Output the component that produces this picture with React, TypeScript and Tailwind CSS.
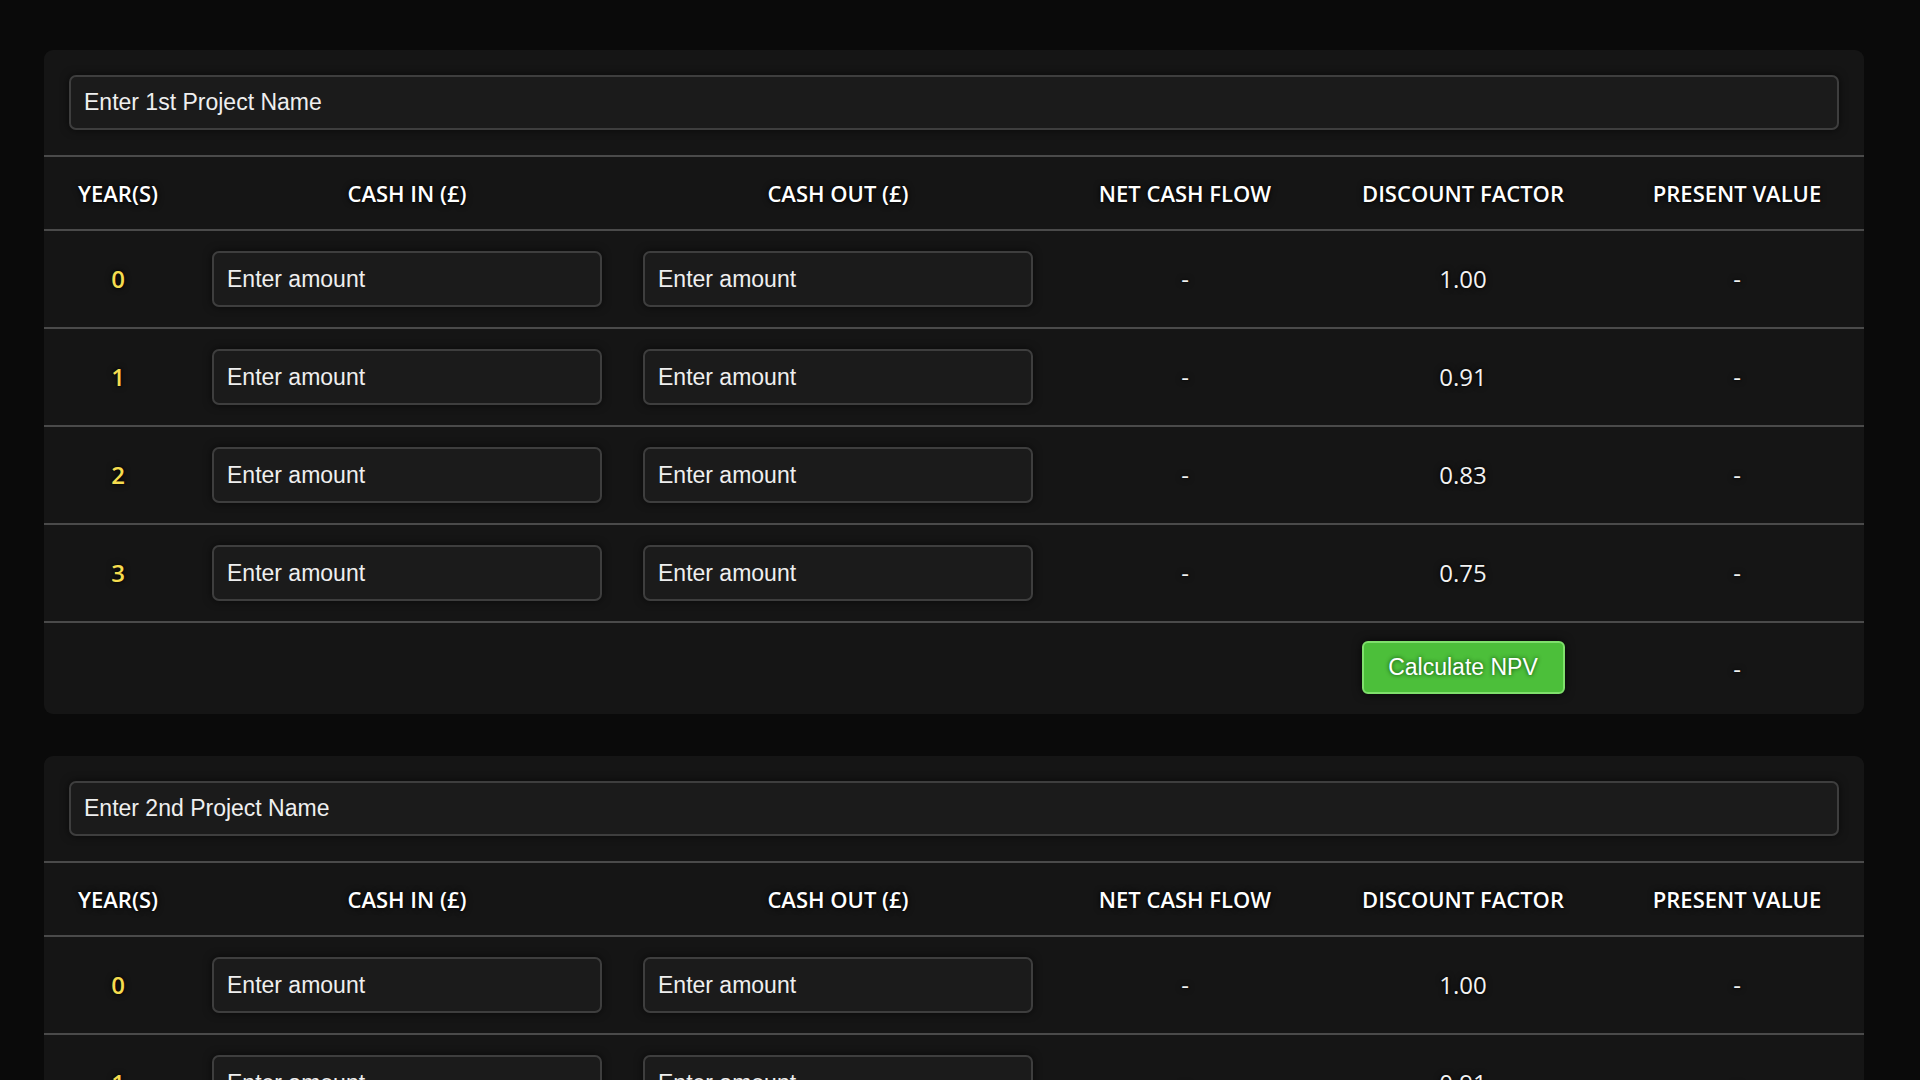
const headers = ["YEAR(S)", "CASH IN (£)", "CASH OUT (£)", "NET CASH FLOW", "DISCOUNT FACTOR", "PRESENT VALUE"];
const factors = ["1.00", "0.91", "0.83", "0.75"];

const cols = "grid grid-cols-[148px_430px_432px_262px_294px_254px]";
const glow = "[text-shadow:0_0_6px_rgba(0,0,0,0.9),0_0_2px_rgba(0,0,0,0.9)]";

function AmountInput() {
    return (
        <input
            type="text"
            placeholder="Enter amount"
            className="w-[390px] h-[56px] rounded-[7px] border-2 border-[#3e3e3e] bg-[#1b1b1b] px-[13px] text-[23px] text-white placeholder:text-[#efefef] shadow-[0_0_8px_rgba(0,0,0,0.6)] outline-none font-['Liberation_Sans',Arial,sans-serif]"
        />
    );
}

function ProjectCard({ label }: { label: string }) {
    return (
        <div className="w-[1820px] rounded-[9px] bg-[#151515]">
            {/* Project name */}
            <div className="px-[25px] pt-[25px] pb-[25px] border-b-2 border-[#4a4a4a]">
                <input
                    type="text"
                    placeholder={label}
                    className="w-full h-[55px] rounded-[7px] border-2 border-[#3e3e3e] bg-[#1b1b1b] px-[13px] text-[23px] text-white placeholder:text-[#efefef] shadow-[0_0_8px_rgba(0,0,0,0.6)] outline-none font-['Liberation_Sans',Arial,sans-serif]"
                />
            </div>

            {/* Header row */}
            <div className={`${cols} h-[74px] items-center border-b-2 border-[#4a4a4a] font-['Open_Sans',sans-serif] font-semibold text-[22px] text-white ${glow}`}>
                {headers.map((h) => (
                    <div key={h} className="text-center">{h}</div>
                ))}
            </div>

            {/* Year rows */}
            {factors.map((f, i) => (
                <div key={i} className={`${cols} h-[98px] items-center border-b-2 border-[#4a4a4a] font-['Open_Sans',sans-serif] text-[24px] text-[#f2f2f2] ${glow}`}>
                    <div className="text-center font-semibold text-[#f5dc4f]">{i}</div>
                    <div className="flex justify-center"><AmountInput /></div>
                    <div className="flex justify-center"><AmountInput /></div>
                    <div className="text-center">-</div>
                    <div className="text-center">{f}</div>
                    <div className="text-center">-</div>
                </div>
            ))}

            {/* Footer */}
            <div className={`${cols} h-[91px] items-center font-['Open_Sans',sans-serif] text-[24px] text-[#f2f2f2] ${glow}`}>
                <div />
                <div />
                <div />
                <div />
                <div className="flex justify-center -mt-[3px]">
                    <button className="w-[203px] h-[53px] rounded-[6px] border-2 border-[#7fe06c] bg-[#4cbf3a] text-[23px] text-white font-['Liberation_Sans',Arial,sans-serif] shadow-[0_0_10px_rgba(0,0,0,0.7)] [text-shadow:0_0_4px_rgba(0,60,0,0.9)]">
                        Calculate NPV
                    </button>
                </div>
                <div className="text-center">-</div>
            </div>
        </div>
    );
}

export default function App() {
    return (
        <div className="min-h-screen bg-[#0a0a0a] pt-[50px] pb-[40px]">
            <div className="ml-[44px] flex flex-col gap-[42px]">
                <ProjectCard label="Enter 1st Project Name" />
                <ProjectCard label="Enter 2nd Project Name" />
            </div>
        </div>
    );
}
